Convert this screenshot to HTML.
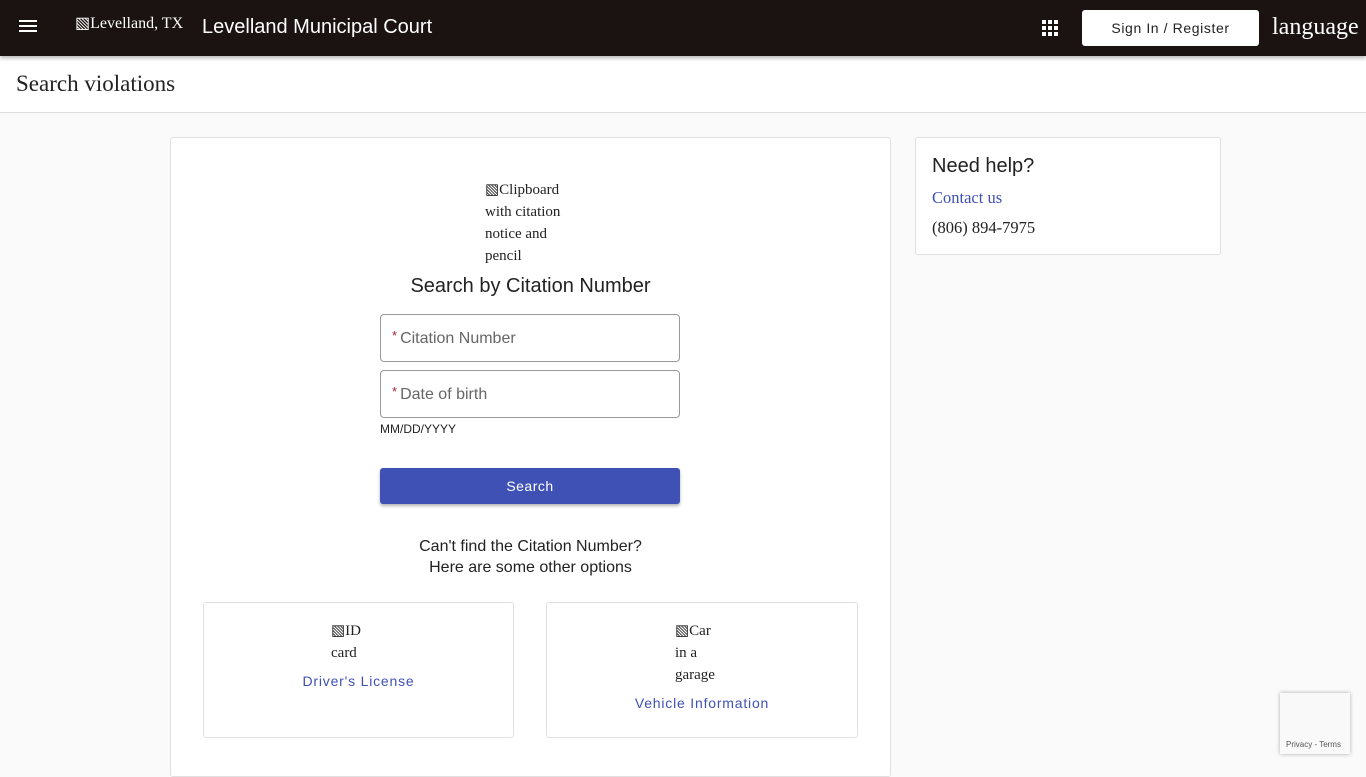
<!DOCTYPE html>
<html><head><style>
*{box-sizing:border-box;margin:0;padding:0}
body{width:1366px;height:768px;overflow:hidden;background:#fafafa;font-family:"Liberation Sans",sans-serif;position:relative}
.top{position:absolute;left:0;top:0;width:1366px;height:56px;background:#1b1311;box-shadow:0 2px 4px rgba(0,0,0,.3);z-index:2}
.abs{position:absolute}
.serif{font-family:"Liberation Serif",serif}
.sub{position:absolute;top:56px;left:0;width:1366px;height:57px;background:#fff;border-bottom:1px solid #ddd}
.card{position:absolute;background:#fff;border:1px solid #e0e0e0;border-radius:3px}
.field{position:absolute;left:380px;width:300px;height:48px;border:1px solid #999;border-radius:4px;font-size:16px;color:#666;padding:13px 0 0 11px}
.field b{color:#a0223a;font-weight:normal;font-size:13px;vertical-align:3px;margin-right:3px}
</style></head><body>
<div class="top">
 <div class="abs" style="left:19px;top:20px;width:18px;height:2px;background:#fff;box-shadow:0 5px 0 #fff,0 10px 0 #fff"></div>
 <div class="abs serif" style="left:75px;top:13px;color:#fff;font-size:16px">▧Levelland, TX</div>
 <div class="abs" style="left:202px;top:16px;color:#fff;font-size:20px">Levelland Municipal Court</div>
 <svg class="abs" style="left:1042px;top:20px" width="16" height="16"><g fill="#fff"><rect x="0" y="0" width="4" height="4"/><rect x="6" y="0" width="4" height="4"/><rect x="12" y="0" width="4" height="4"/><rect x="0" y="6" width="4" height="4"/><rect x="6" y="6" width="4" height="4"/><rect x="12" y="6" width="4" height="4"/><rect x="0" y="12" width="4" height="4"/><rect x="6" y="12" width="4" height="4"/><rect x="12" y="12" width="4" height="4"/></g></svg>
 <div class="abs" style="left:1082px;top:10px;width:177px;height:36px;background:#fff;border-radius:3px;text-align:center;line-height:36px;font-size:14px;color:#222;letter-spacing:.6px">Sign In / Register</div>
 <div class="abs serif" style="left:1272px;top:14px;color:#fff;font-size:24px">language</div>
</div>
<div class="sub"><div class="abs serif" style="left:16px;top:15px;font-size:23px;color:#222">Search violations</div></div>
<div class="card" style="left:170px;top:137px;width:721px;height:640px"></div>
<div class="abs serif" style="left:485px;top:179px;width:95px;font-size:15px;line-height:22px;color:#222">▧Clipboard with citation notice and pencil</div>
<div class="abs" style="left:170px;top:275px;width:721px;text-align:center;font-size:20px;color:#222">Search by Citation Number</div>
<div class="field" style="top:314px"><b>*</b>Citation Number</div>
<div class="field" style="top:370px"><b>*</b>Date of birth</div>
<div class="abs" style="left:380px;top:422px;font-size:12px;color:#222">MM/DD/YYYY</div>
<div class="abs" style="left:380px;top:468px;width:300px;height:36px;background:#3f51b5;border-radius:3px;box-shadow:0 2px 3px rgba(0,0,0,.3);color:#fff;text-align:center;line-height:36px;font-size:14px;letter-spacing:.5px">Search</div>
<div class="abs" style="left:170px;top:536px;width:721px;text-align:center;font-size:16px;line-height:21px;color:#222">Can't find the Citation Number?<br>Here are some other options</div>
<div class="card" style="left:203px;top:602px;width:311px;height:136px"></div>
<div class="abs serif" style="left:331px;top:620px;width:40px;font-size:15px;line-height:22px;color:#222">▧ID card</div>
<div class="abs" style="left:203px;top:673px;width:311px;text-align:center;font-size:14px;color:#3f51b5;letter-spacing:.8px">Driver's License</div>
<div class="card" style="left:546px;top:602px;width:312px;height:136px"></div>
<div class="abs serif" style="left:675px;top:620px;width:45px;font-size:15px;line-height:22px;color:#222">▧Car in a garage</div>
<div class="abs" style="left:546px;top:695px;width:312px;text-align:center;font-size:14px;color:#3f51b5;letter-spacing:.8px">Vehicle Information</div>
<div class="card" style="left:915px;top:137px;width:306px;height:118px"></div>
<div class="abs" style="left:932px;top:155px;font-size:20px;color:#222">Need help?</div>
<div class="abs serif" style="left:932px;top:188px;font-size:16.5px;color:#3f51b5">Contact us</div>
<div class="abs serif" style="left:932px;top:218px;font-size:16.5px;color:#222">(806) 894-7975</div>
<div class="abs" style="left:1280px;top:693px;width:70px;height:61px;background:#f9f9f9;box-shadow:0 0 4px rgba(0,0,0,.3)"><div class="abs" style="left:6px;top:47px;font-size:8px;color:#555;white-space:nowrap">Privacy - Terms</div></div>
</body></html>
